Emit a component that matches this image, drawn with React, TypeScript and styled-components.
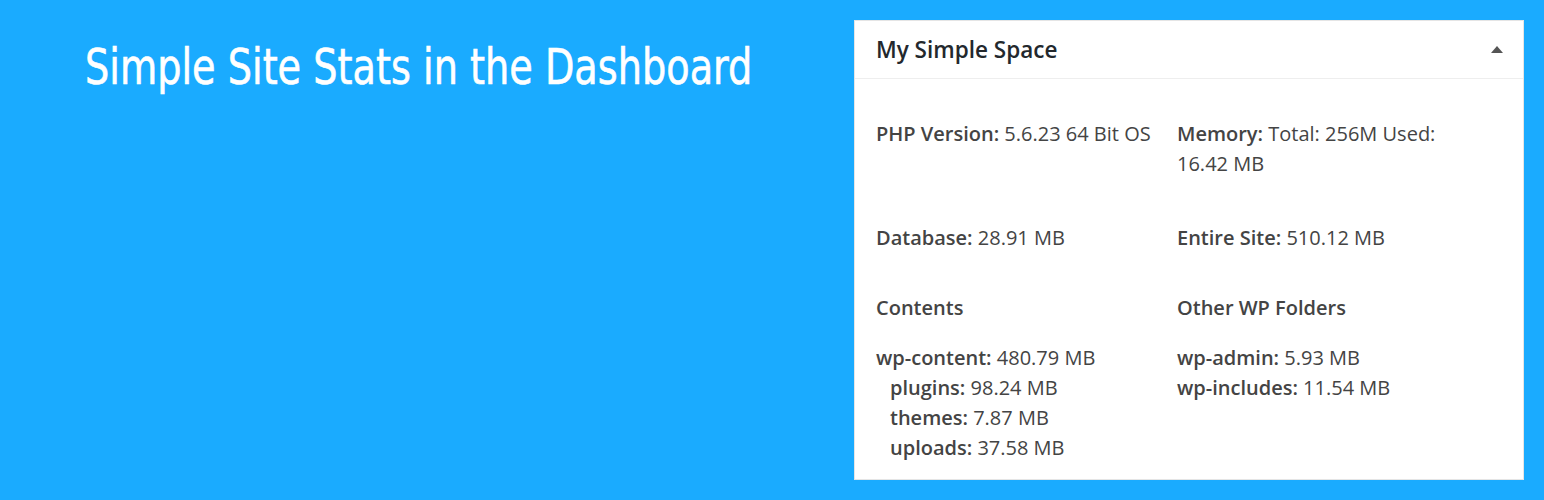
import React from "react";
import styled, { createGlobalStyle } from "styled-components";

const Global = createGlobalStyle`
  html, body { margin: 0; padding: 0; }
  body { background: #1aabff; width: 1544px; height: 500px; overflow: hidden; }
`;

const Page = styled.div`
  display: flex;
  align-items: flex-start;
  width: 1544px;
  height: 500px;
  box-sizing: border-box;
  padding: 20px 20px 0 85px;
`;

const HeadlineWrap = styled.div`
  flex: 1;
  min-width: 0;
  padding-top: 22px;
`;

const Headline = styled.h1`
  display: inline-block;
  margin: 0;
  font-family: "DejaVu Sans Condensed", "Roboto", sans-serif;
  font-stretch: condensed;
  font-weight: 400;
  font-size: 50px;
  line-height: 1;
  color: #ffffff;
  white-space: nowrap;
  transform: scaleX(0.85);
  transform-origin: left center;
  -webkit-text-stroke: 0.6px #ffffff;
`;

const Panel = styled.section`
  flex: 0 0 670px;
  width: 670px;
  height: 460px;
  box-sizing: border-box;
  background: #ffffff;
  border: 1px solid #e5e5e5;
  font-family: "Open Sans", sans-serif;
  color: #444444;
`;

const PanelHeader = styled.header`
  display: flex;
  align-items: center;
  justify-content: space-between;
  height: 57px;
  padding: 0 20px 0 21px;
  border-bottom: 1px solid #eeeeee;
`;

const PanelTitle = styled.h2`
  margin: 0;
  font-size: 22.5px;
  font-weight: 600;
  color: #23282d;
`;

const Toggle = styled.span`
  width: 0;
  height: 0;
  border-left: 6px solid transparent;
  border-right: 6px solid transparent;
  border-bottom: 7px solid #555555;
`;

const Body = styled.div`
  display: grid;
  grid-template-columns: 301px 290px;
  padding: 40px 20px 0 21px;
  font-size: 20px;
  line-height: 30px;
`;

const Cell = styled.div<{ $gap?: number }>`
  margin-bottom: ${(p) => p.$gap ?? 0}px;
`;

const Label = styled.strong`
  font-weight: 600;
`;

const Heading = styled.div`
  font-weight: 600;
  margin-bottom: 20px;
`;

const Line = styled.div<{ $indent?: boolean }>`
  padding-left: ${(p) => (p.$indent ? 14 : 0)}px;
`;

export default function App() {
  return (
    <>
      <Global />
      <Page>
        <HeadlineWrap>
          <Headline>Simple Site Stats in the Dashboard</Headline>
        </HeadlineWrap>
        <Panel>
          <PanelHeader>
            <PanelTitle>My Simple Space</PanelTitle>
            <Toggle />
          </PanelHeader>
          <Body>
            <Cell $gap={44}>
              <Label>PHP Version:</Label> 5.6.23 64 Bit OS
            </Cell>
            <Cell $gap={44}>
              <Label>Memory:</Label> Total: 256M Used: 16.42 MB
            </Cell>
            <Cell $gap={40}>
              <Label>Database:</Label> 28.91 MB
            </Cell>
            <Cell $gap={40}>
              <Label>Entire Site:</Label> 510.12 MB
            </Cell>
            <Cell>
              <Heading>Contents</Heading>
              <Line>
                <Label>wp-content:</Label> 480.79 MB
              </Line>
              <Line $indent>
                <Label>plugins:</Label> 98.24 MB
              </Line>
              <Line $indent>
                <Label>themes:</Label> 7.87 MB
              </Line>
              <Line $indent>
                <Label>uploads:</Label> 37.58 MB
              </Line>
            </Cell>
            <Cell>
              <Heading>Other WP Folders</Heading>
              <Line>
                <Label>wp-admin:</Label> 5.93 MB
              </Line>
              <Line>
                <Label>wp-includes:</Label> 11.54 MB
              </Line>
            </Cell>
          </Body>
        </Panel>
      </Page>
    </>
  );
}
